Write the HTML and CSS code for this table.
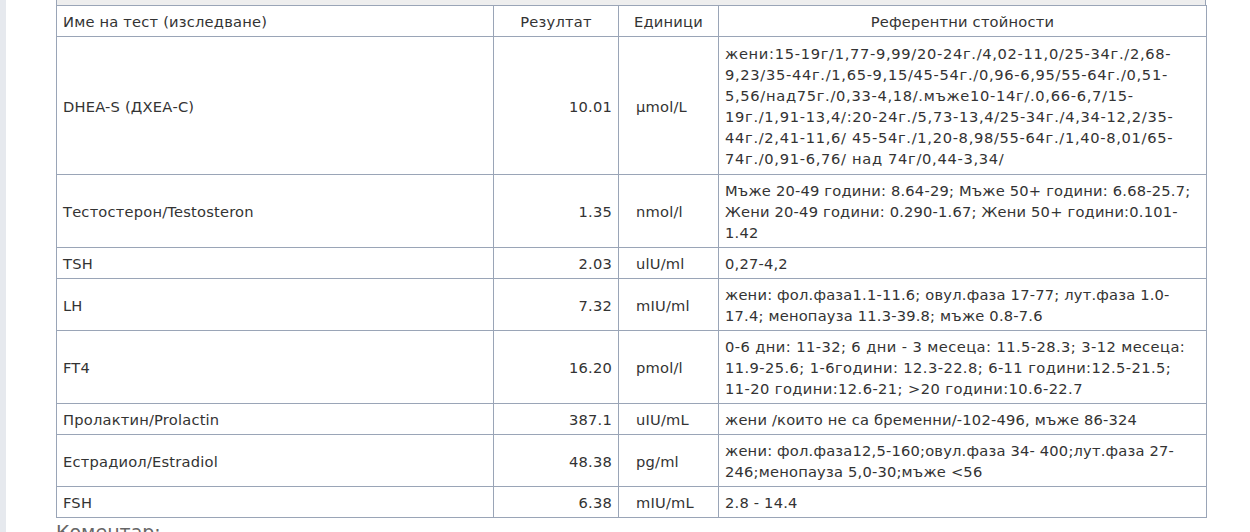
FILE: index.html
```html
<!DOCTYPE html>
<html lang="bg">
<head>
<meta charset="utf-8">
<title>Резултати</title>
<link rel="stylesheet" href="styles.css">
</head>
<body>
<div class="page">
  <div class="content">
    <div class="prev-band"></div>
    <table class="results">
      <colgroup>
        <col class="c-name">
        <col class="c-res">
        <col class="c-unit">
        <col class="c-ref">
      </colgroup>
      <thead>
        <tr>
          <th class="h-name">Име на тест (изследване)</th>
          <th>Резултат</th>
          <th>Единици</th>
          <th>Референтни стойности</th>
        </tr>
      </thead>
      <tbody>
        <tr>
          <td>DHEA-S (ДХЕА-С)</td>
          <td class="res">10.01</td>
          <td class="unit">µmol/L</td>
          <td class="ref numeric-wide">жени:15-19г/1,77-9,99/20-24г./4,02-11,0/25-34г./2,68-9,23/35-44г./1,65-9,15/45-54г./0,96-6,95/55-64г./0,51-5,56/над75г./0,33-4,18/.мъже10-14г/.0,66-6,7/15-19г./1,91-13,4/:20-24г./5,73-13,4/25-34г./4,34-12,2/35-44г./2,41-11,6/ 45-54г./1,20-8,98/55-64г./1,40-8,01/65-74г./0,91-6,76/ над 74г/0,44-3,34/</td>
        </tr>
        <tr>
          <td>Тестостерон/Testosteron</td>
          <td class="res">1.35</td>
          <td class="unit">nmol/l</td>
          <td class="ref">Мъже 20-49 години: 8.64-29; Мъже 50+ години: 6.68-25.7; Жени 20-49 години: 0.290-1.67; Жени 50+ години:0.101-1.42</td>
        </tr>
        <tr>
          <td>TSH</td>
          <td class="res">2.03</td>
          <td class="unit">ulU/ml</td>
          <td class="ref">0,27-4,2</td>
        </tr>
        <tr>
          <td>LH</td>
          <td class="res">7.32</td>
          <td class="unit">mIU/ml</td>
          <td class="ref">жени: фол.фаза1.1-11.6; овул.фаза 17-77; лут.фаза 1.0-17.4; менопауза 11.3-39.8; мъже 0.8-7.6</td>
        </tr>
        <tr>
          <td>FT4</td>
          <td class="res">16.20</td>
          <td class="unit">pmol/l</td>
          <td class="ref numeric-mid">0-6 дни: 11-32; 6 дни - 3 месеца: 11.5-28.3; 3-12 месеца: 11.9-25.6; 1-6години: 12.3-22.8; 6-11 години:12.5-21.5; 11-20 години:12.6-21; &gt;20 години:10.6-22.7</td>
        </tr>
        <tr>
          <td>Пролактин/Prolactin</td>
          <td class="res">387.1</td>
          <td class="unit">uIU/mL</td>
          <td class="ref">жени /които не са бременни/-102-496, мъже 86-324</td>
        </tr>
        <tr>
          <td>Естрадиол/Estradiol</td>
          <td class="res">48.38</td>
          <td class="unit">pg/ml</td>
          <td class="ref">жени: фол.фаза12,5-160;овул.фаза 34- 400;лут.фаза 27-246;менопауза 5,0-30;мъже &lt;56</td>
        </tr>
        <tr>
          <td>FSH</td>
          <td class="res">6.38</td>
          <td class="unit">mIU/mL</td>
          <td class="ref">2.8 - 14.4</td>
        </tr>
      </tbody>
    </table>
    <div class="comment">Коментар:</div>
  </div>
</div>
</body>
</html>
```

FILE: styles.css
```css
html, body {
  margin: 0;
  padding: 0;
  background: #ffffff;
}

.page {
  display: flex;
  min-height: 532px;
  border-left: 6px solid #e6e9ee;
  font-family: "DejaVu Sans", Verdana, sans-serif;
  font-size: 14.67px;
  letter-spacing: 0.2px;
  color: #333333;
}

.content {
  margin-left: 50px;
  width: 1150px;
}

.prev-band {
  height: 5px;
  background: #eeeeee;
  border-left: 1px solid #9aa5b7;
  border-right: 1px solid #9aa5b7;
}

.results {
  width: 1150px;
  border-collapse: collapse;
  table-layout: fixed;
}

.c-name { width: 437px; }
.c-res { width: 125px; }
.c-unit { width: 100px; }
.c-ref { width: 488px; }

.results th,
.results td {
  border: 1px solid #9aa5b7;
  padding: 5px 6px 4px 6px;
  line-height: 21px;
  vertical-align: middle;
}

.results th {
  font-weight: normal;
  text-align: center;
}

.results th.h-name {
  text-align: left;
}

.results td.res {
  text-align: right;
}

.results td.unit {
  padding-left: 17px;
}

.results td.ref {
  padding-left: 6px;
  padding-right: 6px;
}

.results td.numeric-wide {
  letter-spacing: 0.68px;
  padding-top: 6px;
  padding-bottom: 5px;
}

.results td.numeric-mid {
  letter-spacing: 0.42px;
}

.comment {
  margin-top: 3px;
  font-size: 19px;
  letter-spacing: 0;
  color: #666666;
}
```
